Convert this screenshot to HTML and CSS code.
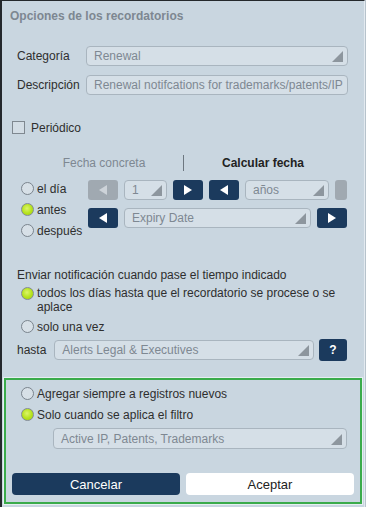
FILE: index.html
```html
<!DOCTYPE html>
<html lang="es">
  <head>
    <meta charset="UTF-8" />
    <meta name="viewport" content="width=device-width, initial-scale=1.0" />
    <title>Opciones de los recordatorios</title>
    <link rel="stylesheet" href="styles.css">
  </head>

  <body>
    <div class="dialog">
      <h1 class="title">Opciones de los recordatorios</h1>

      <div class="fields">
        <span class="label">Categoría</span>
        <div class="select">Renewal<span class="arrow"></span></div>
        <span class="label">Descripción</span>
        <div class="select">Renewal notifcations for trademarks/patents/IP</div>
      </div>

      <div class="check"><span class="box"></span>Periódico</div>

      <div class="tabs">
        <span class="tab">Fecha concreta</span>
        <span class="sep"></span>
        <span class="tab active">Calcular fecha</span>
      </div>

      <div class="dates">
        <div class="radios">
          <div class="radio"><span class="dot"></span>el día</div>
          <div class="radio"><span class="dot on"></span>antes</div>
          <div class="radio"><span class="dot"></span>después</div>
        </div>
        <div class="controls">
          <div class="row">
            <span class="btn off"><span class="tri left"></span></span>
            <div class="select num">1<span class="arrow"></span></div>
            <span class="btn"><span class="tri right"></span></span>
            <span class="btn"><span class="tri left"></span></span>
            <div class="select unit">años<span class="arrow"></span></div>
            <span class="stub"></span>
          </div>
          <div class="row">
            <span class="btn"><span class="tri left"></span></span>
            <div class="select wide">Expiry Date<span class="arrow"></span></div>
            <span class="btn"><span class="tri right"></span></span>
          </div>
        </div>
      </div>

      <p class="notify">Enviar notificación cuando pase el tiempo indicado</p>
      <div class="radio-list">
        <div class="radio multi"><span class="dot on"></span>todos los días hasta que el recordatorio se procese o se aplace</div>
        <div class="radio"><span class="dot"></span>solo una vez</div>
      </div>

      <div class="hasta">
        <span class="label">hasta</span>
        <div class="select grow">Alerts Legal &amp; Executives<span class="arrow"></span></div>
        <span class="btn help">?</span>
      </div>

      <div class="scope">
        <div class="radio"><span class="dot"></span>Agregar siempre a registros nuevos</div>
        <div class="radio"><span class="dot on"></span>Solo cuando se aplica el filtro</div>
        <div class="select filter">Active IP, Patents, Trademarks<span class="arrow"></span></div>
        <div class="actions">
          <button class="cancel">Cancelar</button>
          <button class="ok">Aceptar</button>
        </div>
      </div>
    </div>
  </body>
</html>
```

FILE: styles.css
```css
* {
  margin: 0;
  padding: 0;
  box-sizing: border-box;
}

body {
  background: #b7c3cc;
  font-family: "Liberation Sans", Arial, sans-serif;
  font-size: 12px;
  color: #2e2e2e;
}

.dialog {
  width: 365px;
  height: 507px;
  background: #c9d6e0;
  border-top: 1px solid #24282c;
  border-left: 2px solid #24282c;
  border-right: 1px solid #e3eaf0;
  padding: 0 17px 0 15px;
}

.title {
  font-size: 12px;
  font-weight: bold;
  color: #7d8791;
  line-height: 16px;
  margin: 7px 0 0 -7px;
}

.fields {
  display: grid;
  grid-template-columns: 69px 1fr;
  row-gap: 9px;
  align-items: center;
  margin-top: 22px;
}

.select {
  height: 20px;
  display: flex;
  align-items: center;
  justify-content: space-between;
  padding: 0 4px 0 7px;
  background: #d5dfe7;
  border: 1px solid #a9b5bf;
  border-radius: 4px;
  color: #7e8892;
  font-size: 12px;
  white-space: nowrap;
}

.arrow {
  width: 0;
  height: 0;
  border-left: 11px solid transparent;
  border-bottom: 11px solid #8d969e;
  align-self: flex-end;
  margin-bottom: 3px;
}

.check {
  display: flex;
  align-items: center;
  gap: 6px;
  height: 13px;
  margin: 26px 0 0 -5px;
}

.box {
  width: 13px;
  height: 13px;
  border: 1px solid #7f8890;
  background: #d3dde5;
}

.tabs {
  display: flex;
  align-items: center;
  height: 16px;
  margin-top: 21px;
}

.tab {
  color: #7e8892;
  width: 166px;
  text-align: center;
  padding-left: 8px;
}

.tab.active {
  color: #222;
  font-weight: bold;
  width: auto;
  padding-left: 38px;
}

.sep {
  width: 1px;
  height: 16px;
  background: #6d7780;
}

.dates {
  display: flex;
  margin-top: 9px;
}

.radios {
  width: 72px;
  margin: -2px 0 0 4px;
}

.radio {
  display: flex;
  align-items: center;
  gap: 3px;
  height: 21px;
}

.dot {
  width: 13px;
  height: 13px;
  flex: none;
  border-radius: 50%;
  border: 1px solid #7a848d;
  background: #d7e0e7;
}

.dot.on {
  background: radial-gradient(circle at 45% 40%, #dcf56a 0, #b5e21c 55%, #a2cf12 100%);
  border-color: #828b93;
}

.controls {
  flex: 1;
  display: flex;
  flex-direction: column;
  gap: 8px;
}

.row {
  display: flex;
  gap: 6px;
}

.btn {
  width: 30px;
  height: 20px;
  flex: none;
  display: flex;
  align-items: center;
  justify-content: center;
  background: #1b3a5d;
  border-radius: 3px;
  color: #fff;
}

.btn.off {
  background: #a0a9b1;
}

.tri {
  width: 0;
  height: 0;
  border-top: 5px solid transparent;
  border-bottom: 5px solid transparent;
}

.tri.left {
  border-right: 8px solid #fff;
}

.tri.right {
  border-left: 8px solid #fff;
}

.btn.off .tri.left {
  border-right-color: #cdd3d9;
}

.select.num {
  width: 43px;
}

.select.unit {
  width: 84px;
}

.select.wide {
  width: 187px;
}

.stub {
  width: 12px;
  height: 20px;
  background: #a0a9b1;
  border-radius: 3px;
}

.notify {
  line-height: 14px;
  margin-top: 27px;
}

.radio-list {
  margin: 4px 0 0 4px;
}

.radio.multi {
  align-items: flex-start;
  height: auto;
  line-height: 14px;
  padding-right: 10px;
  margin-bottom: 2px;
}

.radio.multi .dot {
  margin-top: 1px;
}

.hasta {
  display: flex;
  align-items: center;
  gap: 5px;
  margin-top: 2px;
}

.select.grow {
  flex: 1;
  margin-left: 3px;
}

.btn.help {
  width: 28px;
  height: 22px;
  font-size: 12px;
  font-weight: bold;
}

.scope {
  width: 358px;
  margin: 17px 0 0 -13px;
  border: 2px solid #3aab4b;
  box-shadow: 0 0 0 1px #e6eef2;
  padding: 3px 6px 7px;
}

.scope > .radio {
  margin-left: 9px;
}

.select.filter {
  height: 21px;
  margin: 3px 7px 0 41px;
}

.actions {
  display: flex;
  gap: 6px;
  margin-top: 24px;
}

.actions button {
  flex: 1;
  height: 22px;
  border: 0;
  border-radius: 4px;
  font-family: "Liberation Sans", Arial, sans-serif;
  font-size: 13px;
}

.cancel {
  background: #1b3a5d;
  color: #fff;
}

.ok {
  background: #fff;
  color: #222;
}
```
